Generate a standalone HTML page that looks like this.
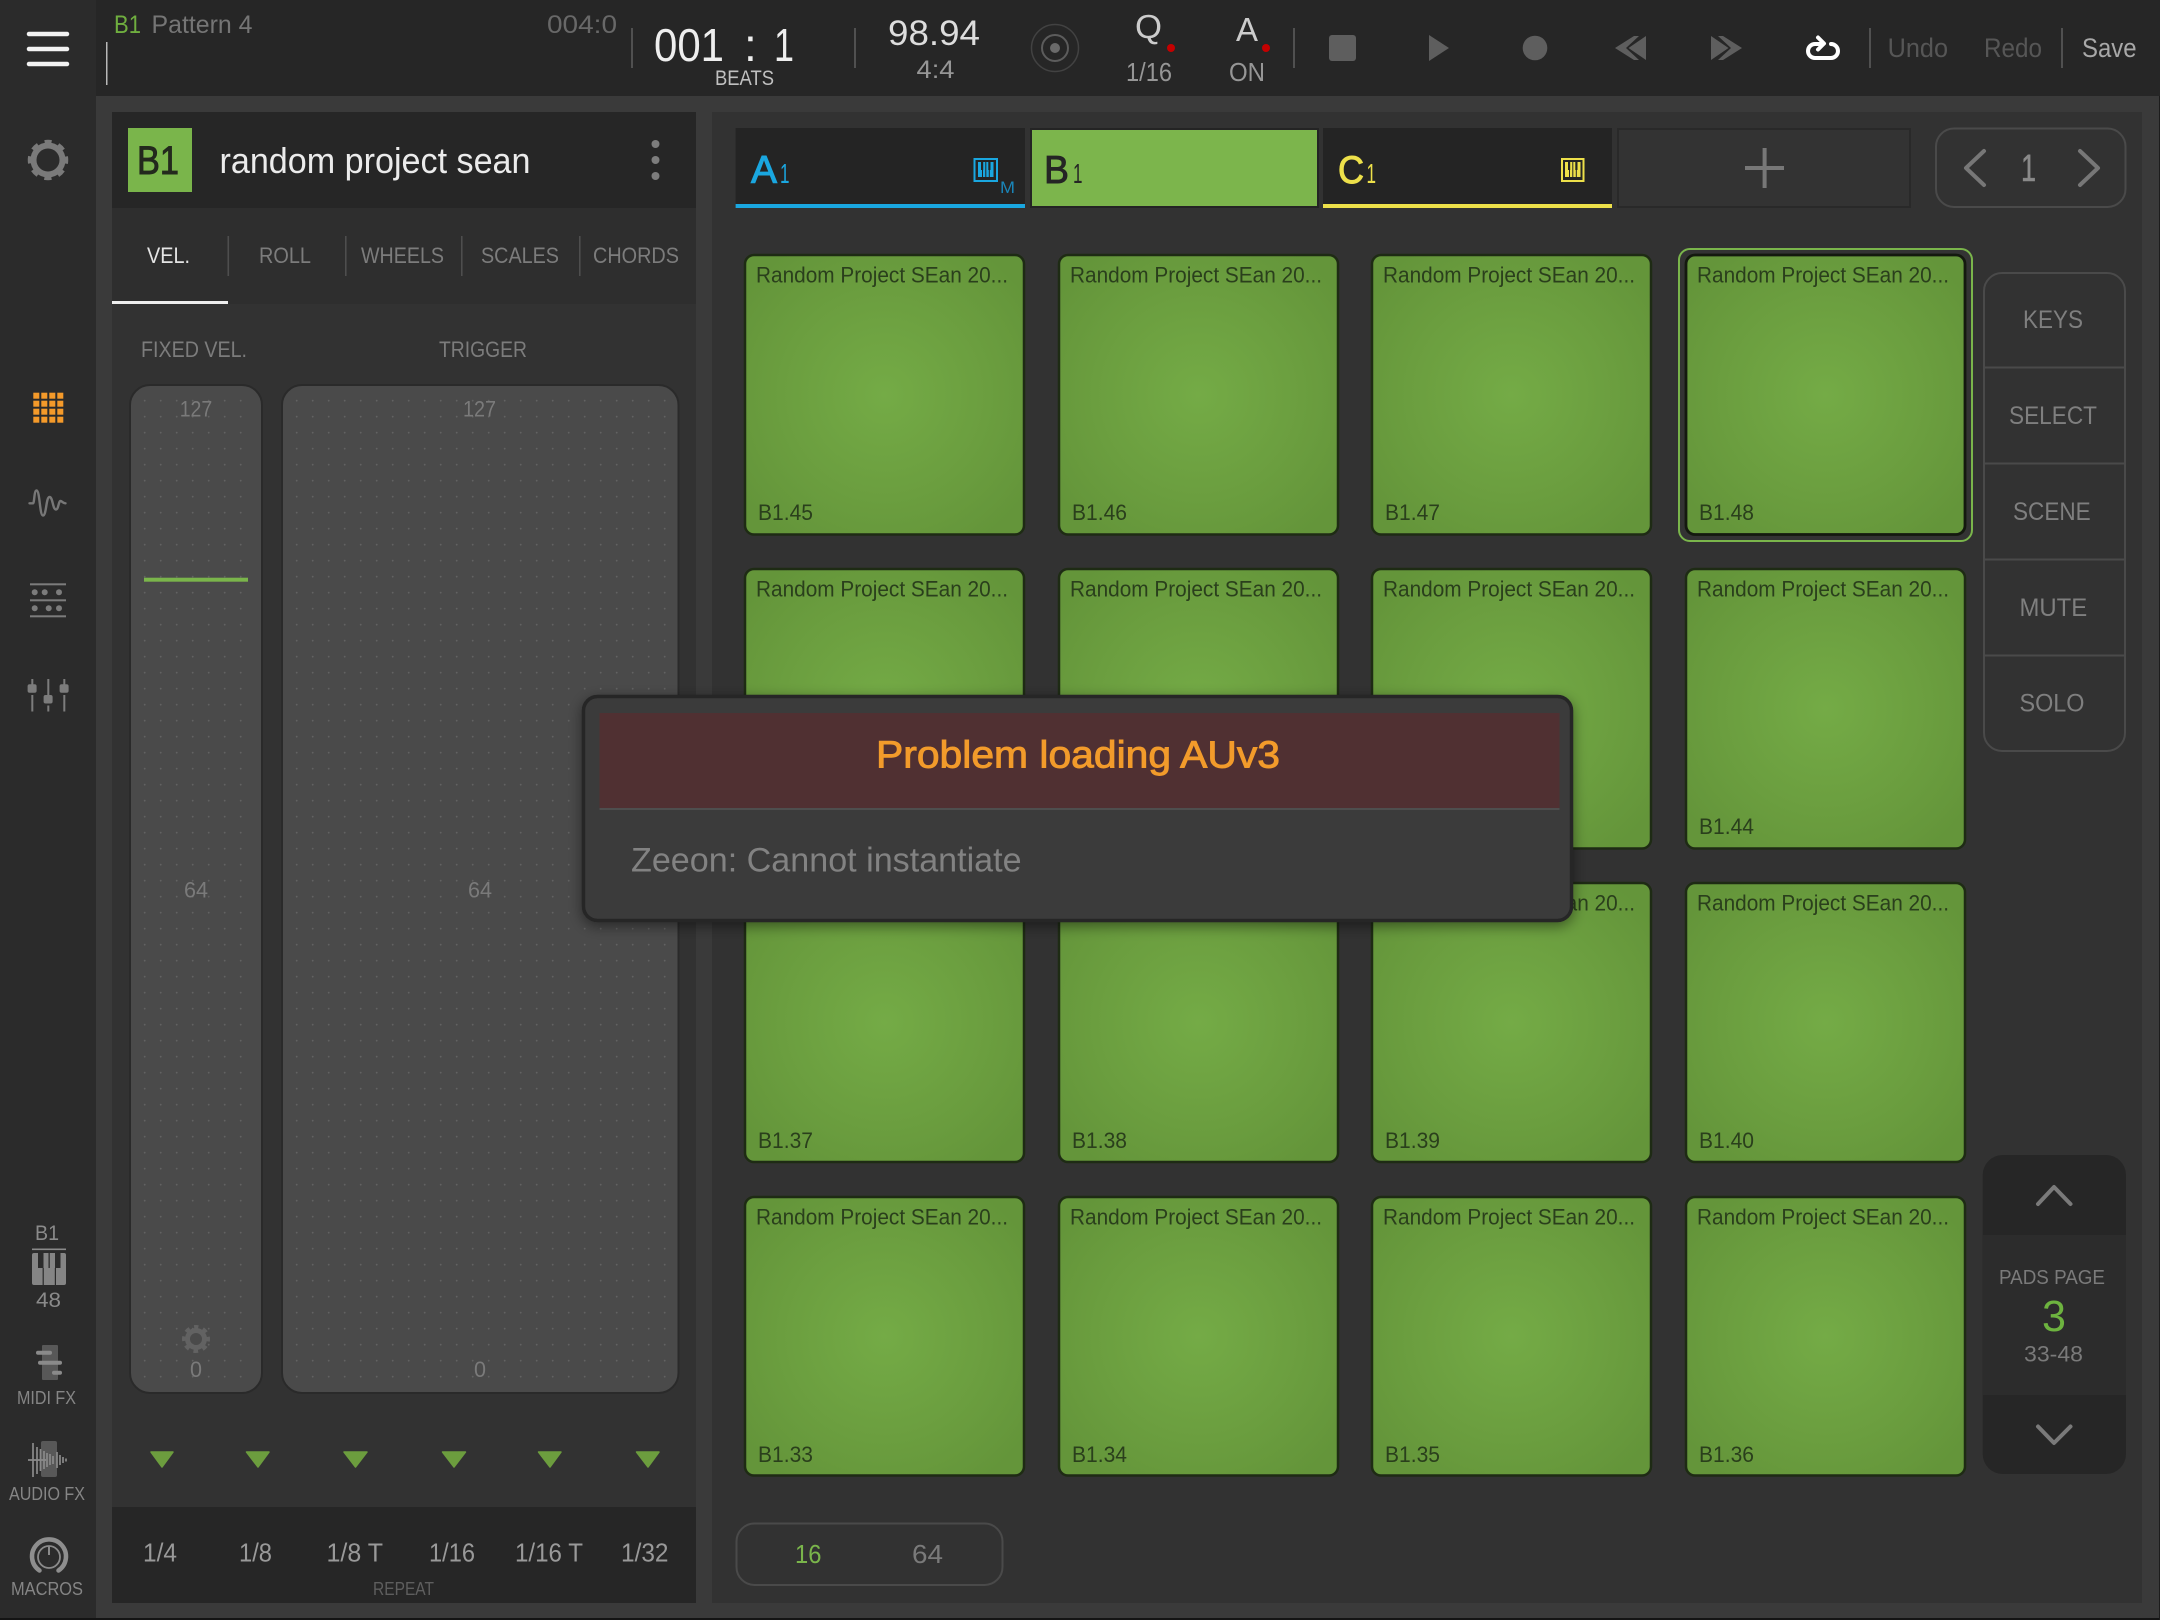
<!DOCTYPE html>
<html lang="en"><head><meta charset="utf-8"><title>Pads</title>
<style>
html,body{margin:0;padding:0;background:#3a3a3a;width:2160px;height:1620px;overflow:hidden}
svg{display:block}
text{font-family:"Liberation Sans",sans-serif;white-space:pre}
.pt{font-size:22px;fill:#2a3f1c}
.pl{font-size:22px;fill:#2a3f1c}
.pad{stroke:#1e2b14;stroke-width:2.5;fill:url(#pg)}
</style></head><body>
<svg xmlns="http://www.w3.org/2000/svg" width="2160" height="1620" viewBox="0 0 2160 1620">
<defs>
<radialGradient id="pg" cx="50%" cy="50%" r="62%"><stop offset="0" stop-color="#74ab46"/><stop offset="0.6" stop-color="#6b9e3f"/><stop offset="1" stop-color="#64953a"/></radialGradient>
<pattern id="d1" patternUnits="userSpaceOnUse" x="140" y="395" width="16" height="16"><circle cx="4.7" cy="5.7" r="0.9" fill="#626262"/></pattern>
<pattern id="d2" patternUnits="userSpaceOnUse" x="292" y="395" width="16" height="16"><circle cx="4.7" cy="5.7" r="0.9" fill="#626262"/></pattern>
<filter id="sh" x="-10%" y="-20%" width="120%" height="140%"><feDropShadow dx="0" dy="4" stdDeviation="7" flood-color="#000" flood-opacity="0.45"/></filter>
</defs>

<!-- backgrounds -->
<rect width="2160" height="1620" fill="#3a3a3a"/>
<rect x="0" y="0" width="96" height="1618" fill="#2b2b2b"/>
<rect x="96" y="0" width="2064" height="96" fill="#262626"/>
<rect x="112" y="112" width="584" height="1491" fill="#323232"/>
<rect x="712" y="112" width="1430" height="1491" fill="#323232"/>
<rect x="0" y="1618" width="2160" height="2" fill="#141414"/>
<rect x="2159" y="96" width="1" height="1524" fill="#1c1c1c"/>

<!-- top rail icons -->
<g stroke="#f2f2f2" stroke-width="4.5" stroke-linecap="round"><path d="M29 34H67M29 49H67M29 64H67"/></g>
<g fill="none" stroke="#7a7a7a">
<circle cx="48" cy="160" r="14.5" stroke-width="6"/>
<circle cx="48" cy="160" r="18" stroke-width="4.5" stroke-dasharray="7 7.14" stroke-dashoffset="3.5" transform="rotate(-90 48 160)"/>
</g>

<!-- top bar left -->
<text x="114" y="33" font-size="25" fill="#6fae3f" textLength="27" lengthAdjust="spacingAndGlyphs">B1</text>
<text x="151.5" y="33" font-size="25" fill="#757575" textLength="101" lengthAdjust="spacingAndGlyphs">Pattern 4</text>
<text x="547" y="33" font-size="25" fill="#686868" textLength="70" lengthAdjust="spacingAndGlyphs">004:0</text>
<rect x="106" y="42" width="1.5" height="43" fill="#b8b8b8"/>
<g fill="#505050"><rect x="631" y="28" width="2" height="40"/><rect x="854" y="28" width="2" height="40"/><rect x="1293" y="28" width="2" height="40"/><rect x="1869" y="28" width="2" height="40"/><rect x="2061" y="28" width="2" height="40"/></g>
<text x="654" y="61" font-size="46" fill="#eeeeee" textLength="70" lengthAdjust="spacingAndGlyphs">001</text>
<text x="744" y="61" font-size="46" fill="#eeeeee">:</text>
<text x="774" y="61" font-size="46" fill="#eeeeee" textLength="20" lengthAdjust="spacingAndGlyphs">1</text>
<text x="715" y="85" font-size="21" fill="#c0c0c0" textLength="59" lengthAdjust="spacingAndGlyphs">BEATS</text>
<text x="888" y="45" font-size="35" fill="#dddddd" textLength="92" lengthAdjust="spacingAndGlyphs">98.94</text>
<text x="916.5" y="78" font-size="25" fill="#969696" textLength="38" lengthAdjust="spacingAndGlyphs">4:4</text>
<circle cx="1055" cy="48" r="23.5" fill="none" stroke="#424242" stroke-width="1.5"/>
<circle cx="1055" cy="48" r="13" fill="none" stroke="#5c5c5c" stroke-width="2"/>
<circle cx="1055" cy="48" r="5" fill="#6a6a6a"/>
<text x="1135" y="38" font-size="33" fill="#cccccc" textLength="27" lengthAdjust="spacingAndGlyphs">Q</text>
<circle cx="1171" cy="48" r="4" fill="#c40000"/>
<text x="1126" y="81" font-size="26" fill="#969696" textLength="46" lengthAdjust="spacingAndGlyphs">1/16</text>
<text x="1236" y="41" font-size="33" fill="#cccccc" textLength="22" lengthAdjust="spacingAndGlyphs">A</text>
<circle cx="1266" cy="48" r="4" fill="#c40000"/>
<text x="1229" y="81" font-size="26" fill="#969696" textLength="36" lengthAdjust="spacingAndGlyphs">ON</text>

<!-- transport -->
<rect x="1329" y="35" width="27" height="26" rx="3" fill="#5e5e5e"/>
<path d="M1429 35L1449 48L1429 61Z" fill="#5e5e5e"/>
<circle cx="1535" cy="48" r="12.3" fill="#5e5e5e"/>
<path d="M1646 36V60L1628.500 48ZM1634 36L1615 48L1634 60L1639 60L1626 48L1639 36Z" fill="#5e5e5e"/>
<path d="M1711 36V60L1728.500 48ZM1723 36L1742 48L1723 60L1718 60L1731 48L1718 36Z" fill="#5e5e5e"/>
<g fill="none" stroke="#ffffff" stroke-width="4" stroke-linecap="round" stroke-linejoin="round">
<path d="M1822 44H1815A7 7 0 0 0 1815 58H1831A7 7 0 0 0 1831 44"/>
<path d="M1818 37.5L1824 43.5L1818 49.5"/>
</g>
<text x="1887.6" y="57" font-size="27" fill="#565656" textLength="60.4" lengthAdjust="spacingAndGlyphs">Undo</text>
<text x="1984" y="57" font-size="27" fill="#565656" textLength="58" lengthAdjust="spacingAndGlyphs">Redo</text>
<text x="2082" y="57" font-size="27" fill="#a8a8a8" textLength="54.5" lengthAdjust="spacingAndGlyphs">Save</text>

<!-- rail nav icons -->
<g fill="#f49a2a">
<rect x="33.3" y="392.7" width="6" height="6"/><rect x="41.3" y="392.7" width="6" height="6"/><rect x="49.3" y="392.7" width="6" height="6"/><rect x="57.3" y="392.7" width="6" height="6"/>
<rect x="33.3" y="400.7" width="6" height="6"/><rect x="41.3" y="400.7" width="6" height="6"/><rect x="49.3" y="400.7" width="6" height="6"/><rect x="57.3" y="400.7" width="6" height="6"/>
<rect x="33.3" y="408.7" width="6" height="6"/><rect x="41.3" y="408.7" width="6" height="6"/><rect x="49.3" y="408.7" width="6" height="6"/><rect x="57.3" y="408.7" width="6" height="6"/>
<rect x="33.3" y="416.7" width="6" height="6"/><rect x="41.3" y="416.7" width="6" height="6"/><rect x="49.3" y="416.7" width="6" height="6"/><rect x="57.3" y="416.7" width="6" height="6"/>
</g>
<path d="M29.5 503.3H33C34.5 503.3 34 490.5 36.5 490.5C40 490.5 39.5 515.5 43 515.5C46.5 515.5 46 497 49.5 497C53 497 52.5 509.5 56 509.5C58.5 509.5 58.5 501 60.5 501C62 501 63 503.5 65.5 503.3" fill="none" stroke="#777" stroke-width="2.4" stroke-linecap="round"/>
<g fill="#7c7c7c">
<rect x="30" y="583.3" width="36" height="2"/><rect x="30" y="599.3" width="36" height="2"/><rect x="30" y="615.3" width="36" height="2"/>
<circle cx="34.7" cy="592.3" r="3"/><circle cx="44.7" cy="592.3" r="3"/><circle cx="59" cy="592.3" r="3"/>
<circle cx="34.7" cy="608.3" r="3"/><circle cx="48.7" cy="608.3" r="3"/><circle cx="59" cy="608.3" r="3"/>
</g>
<g fill="#7c7c7c">
<rect x="31.3" y="679" width="2" height="6"/><rect x="31.3" y="695" width="2" height="16.5"/><rect x="27.6" y="684.3" width="9" height="8.5" rx="2"/>
<rect x="47.3" y="679" width="2" height="16"/><rect x="47.3" y="705.5" width="2" height="6"/><rect x="43.6" y="695" width="9" height="8.5" rx="2"/>
<rect x="63.3" y="679" width="2" height="6"/><rect x="63.3" y="695" width="2" height="16.5"/><rect x="59.6" y="684.3" width="9" height="8.5" rx="2"/>
</g>

<!-- rail bottom -->
<text x="35" y="1240" font-size="21" fill="#8a8a8a" textLength="24" lengthAdjust="spacingAndGlyphs">B1</text>
<rect x="32" y="1248.5" width="34" height="1.6" fill="#8a8a8a"/>
<rect x="32" y="1253" width="34" height="32" rx="2" fill="#858585"/>
<g fill="#2b2b2b"><rect x="38" y="1253" width="5.5" height="15"/><rect x="48.5" y="1253" width="1.3" height="15"/><rect x="55" y="1253" width="5.5" height="15"/><rect x="42.6" y="1268" width="1.2" height="17"/><rect x="54.8" y="1268" width="1.2" height="17"/></g>
<text x="36" y="1307" font-size="21" fill="#8a8a8a" textLength="25" lengthAdjust="spacingAndGlyphs">48</text>
<rect x="42" y="1345" width="16" height="35" rx="1" fill="#585858"/>
<g fill="#8a8a8a"><rect x="36" y="1350.7" width="16" height="4" rx="2"/><rect x="38" y="1360.7" width="24" height="4" rx="2"/><rect x="52" y="1370.7" width="10" height="4" rx="2"/></g>
<text x="17" y="1404" font-size="18" fill="#858585" textLength="59" lengthAdjust="spacingAndGlyphs">MIDI FX</text>
<rect x="41" y="1441" width="16" height="36" rx="2" fill="#585858"/>
<path d="M28 1460H46M33 1443V1477M37 1447V1474M40.5 1449V1471M44 1451V1469M47 1453V1467M50 1454V1465M53 1456V1464M57 1452V1468M60 1455V1465M63 1457V1463M66 1458.5V1461.5" stroke="#8a8a8a" stroke-width="1.7" fill="none"/>
<text x="9" y="1500" font-size="18" fill="#858585" textLength="76" lengthAdjust="spacingAndGlyphs">AUDIO FX</text>
<path d="M39.5 1570.5A17 17 0 1 1 58.5 1570.5" fill="none" stroke="#8e8e8e" stroke-width="4.5" stroke-linecap="round"/>
<circle cx="49" cy="1557" r="11" fill="none" stroke="#8a8a8a" stroke-width="1.8"/>
<rect x="48" y="1546" width="2" height="9" fill="#8a8a8a"/>
<text x="11" y="1595" font-size="18" fill="#858585" textLength="72" lengthAdjust="spacingAndGlyphs">MACROS</text>

<!-- left panel header -->
<rect x="112" y="112" width="584" height="96" fill="#262626"/>
<rect x="128" y="128" width="64" height="64" fill="#7ab54b"/>
<text x="137" y="174" font-size="40" fill="#23291d" stroke="#23291d" stroke-width="0.9" textLength="42" lengthAdjust="spacingAndGlyphs">B1</text>
<text x="219.5" y="173" font-size="36" fill="#ebebeb" textLength="311" lengthAdjust="spacingAndGlyphs">random project sean</text>
<circle cx="655.5" cy="144" r="4" fill="#7d7d7d"/><circle cx="655.5" cy="160" r="4" fill="#7d7d7d"/><circle cx="655.5" cy="176" r="4" fill="#7d7d7d"/>

<!-- left tabs -->
<rect x="112" y="208" width="584" height="96" fill="#2e2e2e"/>
<rect x="112" y="301" width="116" height="3" fill="#eeeeee"/>
<g fill="#4e4e4e"><rect x="227.5" y="236" width="1.6" height="40"/><rect x="345" y="236" width="1.6" height="40"/><rect x="461" y="236" width="1.6" height="40"/><rect x="579" y="236" width="1.6" height="40"/></g>
<text x="147" y="263" font-size="22" fill="#e4e4e4" textLength="43" lengthAdjust="spacingAndGlyphs">VEL.</text>
<g font-size="22" fill="#7c7c7c">
<text x="259" y="263" textLength="52" lengthAdjust="spacingAndGlyphs">ROLL</text>
<text x="361" y="263" textLength="83" lengthAdjust="spacingAndGlyphs">WHEELS</text>
<text x="481" y="263" textLength="78" lengthAdjust="spacingAndGlyphs">SCALES</text>
<text x="593" y="263" textLength="86" lengthAdjust="spacingAndGlyphs">CHORDS</text>
<text x="141" y="357" textLength="106" lengthAdjust="spacingAndGlyphs">FIXED VEL.</text>
<text x="439" y="357" textLength="88" lengthAdjust="spacingAndGlyphs">TRIGGER</text>
</g>

<!-- sliders -->
<rect x="130" y="385" width="132" height="1008" rx="20" fill="#4a4a4a" stroke="#2a2a2a" stroke-width="2"/>
<rect x="282" y="385" width="396.5" height="1008" rx="20" fill="#4a4a4a" stroke="#2a2a2a" stroke-width="2"/>
<rect x="140" y="395" width="112" height="985" fill="url(#d1)"/>
<rect x="292" y="395" width="378" height="985" fill="url(#d2)"/>
<rect x="144" y="577.7" width="104" height="4" fill="#7ab54b"/>
<g font-size="22" fill="#7a7a7a">
<text x="179.7" y="416.5" textLength="32.6" lengthAdjust="spacingAndGlyphs">127</text>
<text x="463" y="416.5" textLength="33" lengthAdjust="spacingAndGlyphs">127</text>
<text x="184" y="897.5" textLength="24" lengthAdjust="spacingAndGlyphs">64</text>
<text x="468" y="897.5" textLength="24" lengthAdjust="spacingAndGlyphs">64</text>
<text x="190" y="1377" textLength="12" lengthAdjust="spacingAndGlyphs">0</text>
<text x="474" y="1377" textLength="12" lengthAdjust="spacingAndGlyphs">0</text>
</g>
<g fill="none" stroke="#626262">
<circle cx="196" cy="1339" r="8.5" stroke-width="5"/>
<circle cx="196" cy="1339" r="12" stroke-width="4" stroke-dasharray="4.7 4.72" stroke-dashoffset="2.35" transform="rotate(-90 196 1339)"/>
</g>

<!-- triangles -->
<g fill="#6c9d3e" stroke="#6c9d3e" stroke-width="1.5" stroke-linejoin="round">
<path d="M151 1452H173L162 1467Z"/><path d="M246.5 1452H269L258 1467Z"/><path d="M344 1452H367L355.5 1467Z"/>
<path d="M442.5 1452H465.5L454 1467Z"/><path d="M538.5 1452H561L550 1467Z"/><path d="M636.5 1452H659L648 1467Z"/>
</g>

<!-- repeat bar -->
<rect x="112" y="1507" width="584" height="96" fill="#262626"/>
<g font-size="26" fill="#999999">
<text x="143" y="1561.5" textLength="34" lengthAdjust="spacingAndGlyphs">1/4</text>
<text x="239" y="1561.5" textLength="33" lengthAdjust="spacingAndGlyphs">1/8</text>
<text x="326.5" y="1561.5" textLength="56.5" lengthAdjust="spacingAndGlyphs">1/8 T</text>
<text x="429" y="1561.5" textLength="46" lengthAdjust="spacingAndGlyphs">1/16</text>
<text x="515" y="1561.5" textLength="68" lengthAdjust="spacingAndGlyphs">1/16 T</text>
<text x="621" y="1561.5" textLength="47.5" lengthAdjust="spacingAndGlyphs">1/32</text>
</g>
<text x="373" y="1595" font-size="18" fill="#5e5e5e" textLength="61" lengthAdjust="spacingAndGlyphs">REPEAT</text>

<!-- track tabs -->
<rect x="735.6" y="128" width="289.4" height="80" fill="#242424"/>
<rect x="735.6" y="204" width="289.4" height="4" fill="#1aa7e0"/>
<text x="751" y="183" font-size="39" fill="#1aa7e0" stroke="#1aa7e0" stroke-width="1" textLength="26" lengthAdjust="spacingAndGlyphs">A</text>
<text x="780" y="183" font-size="28" fill="#1aa7e0" textLength="9.5" lengthAdjust="spacingAndGlyphs">1</text>
<g>
<rect x="974.5" y="159" width="22.5" height="22" fill="none" stroke="#1aa7e0" stroke-width="2"/>
<rect x="978" y="162" width="15.5" height="15" fill="#1aa7e0"/>
<rect x="981" y="162" width="2.2" height="8" fill="#242424"/><rect x="988.3" y="162" width="2.2" height="8" fill="#242424"/>
<rect x="982" y="170" width="1" height="7" fill="#242424"/><rect x="985.3" y="162" width="1" height="15" fill="#242424"/><rect x="988.8" y="170" width="1" height="7" fill="#242424"/>
</g>
<text x="1000" y="193" font-size="17" fill="#1a85b8" textLength="15" lengthAdjust="spacingAndGlyphs">M</text>

<rect x="1030" y="128" width="289" height="80" fill="#242424"/>
<rect x="1032" y="130" width="285" height="76" fill="#7cb54c"/>
<text x="1044" y="183" font-size="39" fill="#252525" stroke="#252525" stroke-width="0.9" textLength="25" lengthAdjust="spacingAndGlyphs">B</text>
<text x="1073" y="183" font-size="28" fill="#252525" textLength="9.5" lengthAdjust="spacingAndGlyphs">1</text>

<rect x="1323" y="128" width="289" height="80" fill="#242424"/>
<rect x="1323" y="204" width="289" height="4" fill="#ede04a"/>
<text x="1338" y="183" font-size="39" fill="#ede04a" stroke="#ede04a" stroke-width="1" textLength="26" lengthAdjust="spacingAndGlyphs">C</text>
<text x="1366.5" y="183" font-size="28" fill="#ede04a" textLength="9.5" lengthAdjust="spacingAndGlyphs">1</text>
<g>
<rect x="1562" y="159" width="21.5" height="22" fill="none" stroke="#ede04a" stroke-width="2"/>
<rect x="1565" y="162" width="15.5" height="15" fill="#ede04a"/>
<rect x="1568" y="162" width="2.2" height="8" fill="#242424"/><rect x="1575.3" y="162" width="2.2" height="8" fill="#242424"/>
<rect x="1569" y="170" width="1" height="7" fill="#242424"/><rect x="1572.3" y="162" width="1" height="15" fill="#242424"/><rect x="1575.8" y="170" width="1" height="7" fill="#242424"/>
</g>

<rect x="1618" y="129" width="292" height="78" fill="#333333" stroke="#292929" stroke-width="2"/>
<path d="M1745 168H1784M1764.6 148V188" stroke="#777777" stroke-width="4" fill="none"/>

<rect x="1936" y="128.500" width="189.500" height="78.500" rx="18" fill="none" stroke="#4a4a4a" stroke-width="2"/>
<path d="M1984 151L1966 168L1984 185M2080 151L2098 168L2080 185" fill="none" stroke="#777777" stroke-width="4" stroke-linecap="round" stroke-linejoin="round"/>
<text x="2021" y="181" font-size="38" fill="#8a8a8a" stroke="#8a8a8a" stroke-width="0.5" textLength="15" lengthAdjust="spacingAndGlyphs">1</text>

<!-- pads -->
<rect x="1679" y="249" width="293" height="292" rx="11" fill="#333333" stroke="#7ab54b" stroke-width="2"/>

<rect class="pad" x="745" y="255" width="279" height="279.500" rx="9"/>
<text class="pt" x="756" y="282.5" textLength="252" lengthAdjust="spacingAndGlyphs">Random Project SEan 20...</text>
<text class="pl" x="758" y="520" textLength="55" lengthAdjust="spacingAndGlyphs">B1.45</text>
<rect class="pad" x="1059" y="255" width="279" height="279.500" rx="9"/>
<text class="pt" x="1070" y="282.5" textLength="252" lengthAdjust="spacingAndGlyphs">Random Project SEan 20...</text>
<text class="pl" x="1072" y="520" textLength="55" lengthAdjust="spacingAndGlyphs">B1.46</text>
<rect class="pad" x="1372" y="255" width="279" height="279.500" rx="9"/>
<text class="pt" x="1383" y="282.5" textLength="252" lengthAdjust="spacingAndGlyphs">Random Project SEan 20...</text>
<text class="pl" x="1385" y="520" textLength="55" lengthAdjust="spacingAndGlyphs">B1.47</text>
<rect class="pad" x="1686" y="255" width="279" height="279.500" rx="9" style="stroke:#14190f;stroke-width:2.8"/>
<text class="pt" x="1697" y="282.5" textLength="252" lengthAdjust="spacingAndGlyphs">Random Project SEan 20...</text>
<text class="pl" x="1699" y="520" textLength="55" lengthAdjust="spacingAndGlyphs">B1.48</text>

<rect class="pad" x="745" y="569" width="279" height="279.500" rx="9"/>
<text class="pt" x="756" y="596.5" textLength="252" lengthAdjust="spacingAndGlyphs">Random Project SEan 20...</text>
<text class="pl" x="758" y="834" textLength="55" lengthAdjust="spacingAndGlyphs">B1.41</text>
<rect class="pad" x="1059" y="569" width="279" height="279.500" rx="9"/>
<text class="pt" x="1070" y="596.5" textLength="252" lengthAdjust="spacingAndGlyphs">Random Project SEan 20...</text>
<text class="pl" x="1072" y="834" textLength="55" lengthAdjust="spacingAndGlyphs">B1.42</text>
<rect class="pad" x="1372" y="569" width="279" height="279.500" rx="9"/>
<text class="pt" x="1383" y="596.5" textLength="252" lengthAdjust="spacingAndGlyphs">Random Project SEan 20...</text>
<text class="pl" x="1385" y="834" textLength="55" lengthAdjust="spacingAndGlyphs">B1.43</text>
<rect class="pad" x="1686" y="569" width="279" height="279.500" rx="9"/>
<text class="pt" x="1697" y="596.5" textLength="252" lengthAdjust="spacingAndGlyphs">Random Project SEan 20...</text>
<text class="pl" x="1699" y="834" textLength="55" lengthAdjust="spacingAndGlyphs">B1.44</text>

<rect class="pad" x="745" y="883" width="279" height="279" rx="9"/>
<text class="pt" x="756" y="910.5" textLength="252" lengthAdjust="spacingAndGlyphs">Random Project SEan 20...</text>
<text class="pl" x="758" y="1148" textLength="55" lengthAdjust="spacingAndGlyphs">B1.37</text>
<rect class="pad" x="1059" y="883" width="279" height="279" rx="9"/>
<text class="pt" x="1070" y="910.5" textLength="252" lengthAdjust="spacingAndGlyphs">Random Project SEan 20...</text>
<text class="pl" x="1072" y="1148" textLength="55" lengthAdjust="spacingAndGlyphs">B1.38</text>
<rect class="pad" x="1372" y="883" width="279" height="279" rx="9"/>
<text class="pt" x="1383" y="910.5" textLength="252" lengthAdjust="spacingAndGlyphs">Random Project SEan 20...</text>
<text class="pl" x="1385" y="1148" textLength="55" lengthAdjust="spacingAndGlyphs">B1.39</text>
<rect class="pad" x="1686" y="883" width="279" height="279" rx="9"/>
<text class="pt" x="1697" y="910.5" textLength="252" lengthAdjust="spacingAndGlyphs">Random Project SEan 20...</text>
<text class="pl" x="1699" y="1148" textLength="55" lengthAdjust="spacingAndGlyphs">B1.40</text>

<rect class="pad" x="745" y="1197" width="279" height="278.500" rx="9"/>
<text class="pt" x="756" y="1224.5" textLength="252" lengthAdjust="spacingAndGlyphs">Random Project SEan 20...</text>
<text class="pl" x="758" y="1462" textLength="55" lengthAdjust="spacingAndGlyphs">B1.33</text>
<rect class="pad" x="1059" y="1197" width="279" height="278.500" rx="9"/>
<text class="pt" x="1070" y="1224.5" textLength="252" lengthAdjust="spacingAndGlyphs">Random Project SEan 20...</text>
<text class="pl" x="1072" y="1462" textLength="55" lengthAdjust="spacingAndGlyphs">B1.34</text>
<rect class="pad" x="1372" y="1197" width="279" height="278.500" rx="9"/>
<text class="pt" x="1383" y="1224.5" textLength="252" lengthAdjust="spacingAndGlyphs">Random Project SEan 20...</text>
<text class="pl" x="1385" y="1462" textLength="55" lengthAdjust="spacingAndGlyphs">B1.35</text>
<rect class="pad" x="1686" y="1197" width="279" height="278.500" rx="9"/>
<text class="pt" x="1697" y="1224.5" textLength="252" lengthAdjust="spacingAndGlyphs">Random Project SEan 20...</text>
<text class="pl" x="1699" y="1462" textLength="55" lengthAdjust="spacingAndGlyphs">B1.36</text>

<!-- side buttons -->
<rect x="1984" y="273" width="141" height="478" rx="18" fill="none" stroke="#4a4a4a" stroke-width="2"/>
<g fill="#4a4a4a"><rect x="1984" y="366.5" width="141" height="2"/><rect x="1984" y="462.5" width="141" height="2"/><rect x="1984" y="558.5" width="141" height="2"/><rect x="1984" y="654.5" width="141" height="2"/></g>
<g font-size="25" fill="#7f7f7f">
<text x="2023" y="328" textLength="60" lengthAdjust="spacingAndGlyphs">KEYS</text>
<text x="2009" y="424" textLength="88" lengthAdjust="spacingAndGlyphs">SELECT</text>
<text x="2013" y="520" textLength="77.7" lengthAdjust="spacingAndGlyphs">SCENE</text>
<text x="2019.500" y="616" textLength="67.7" lengthAdjust="spacingAndGlyphs">MUTE</text>
<text x="2019.500" y="711.500" textLength="65" lengthAdjust="spacingAndGlyphs">SOLO</text>
</g>

<!-- pads page -->
<rect x="1982.7" y="1155" width="143.3" height="319" rx="20" fill="#262626"/>
<rect x="1982.7" y="1235" width="143.3" height="160" fill="#2c2c2c"/>
<path d="M2038 1204L2054 1187L2070.500 1204M2038 1426.500L2054 1443L2070.500 1426.500" fill="none" stroke="#7a7a7a" stroke-width="4" stroke-linecap="round" stroke-linejoin="round"/>
<text x="1999" y="1284" font-size="20" fill="#7a7a7a" textLength="106" lengthAdjust="spacingAndGlyphs">PADS PAGE</text>
<text x="2042" y="1331" font-size="44" fill="#6db33f" textLength="24" lengthAdjust="spacingAndGlyphs">3</text>
<text x="2024" y="1361.500" font-size="22" fill="#7a7a7a" textLength="59" lengthAdjust="spacingAndGlyphs">33-48</text>

<!-- 16/64 -->
<rect x="736.5" y="1523.500" width="266" height="61.500" rx="18" fill="none" stroke="#4a4a4a" stroke-width="2"/>
<text x="795" y="1563" font-size="26" fill="#7ab54b" textLength="26.4" lengthAdjust="spacingAndGlyphs">16</text>
<text x="912" y="1563" font-size="26" fill="#7a7a7a" textLength="31" lengthAdjust="spacingAndGlyphs">64</text>

<!-- dialog -->
<rect x="583.500" y="696.500" width="988" height="224" rx="14" fill="#3a3a3a" stroke="#262626" stroke-width="3.500" filter="url(#sh)"/>
<rect x="599.500" y="713" width="960" height="95" fill="#503032"/>
<rect x="599.500" y="808" width="960" height="2" fill="#4e4e4e"/>
<text x="876" y="767.500" font-size="38" fill="#f29b2b" stroke="#f29b2b" stroke-width="0.9" textLength="404" lengthAdjust="spacingAndGlyphs">Problem loading AUv3</text>
<text x="631" y="871.700" font-size="34" fill="#828282" textLength="390.600" lengthAdjust="spacingAndGlyphs">Zeeon: Cannot instantiate</text>
</svg>
</body></html>
